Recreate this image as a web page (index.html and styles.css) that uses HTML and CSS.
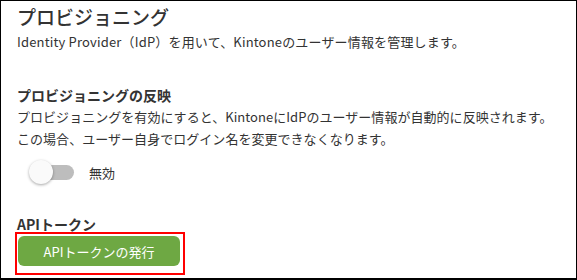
FILE: index.html
```html
<!DOCTYPE html>
<html lang="ja">
<head>
<meta charset="utf-8">
<link rel="stylesheet" href="styles.css">
</head>
<body>
<div class="frame">
  <h1 class="title">プロビジョニング</h1>
  <p class="subtitle">Identity Provider（IdP）を用いて、Kintoneのユーザー情報を管理します。</p>

  <h2 class="heading first">プロビジョニングの反映</h2>
  <p class="desc">プロビジョニングを有効にすると、KintoneにIdPのユーザー情報が自動的に反映されます。<br>この場合、ユーザー自身でログイン名を変更できなくなります。</p>

  <div class="toggle-row">
    <span class="toggle"><span class="track"></span><span class="knob"></span></span>
    <span class="toggle-label">無効</span>
  </div>

  <h2 class="heading api">APIトークン</h2>
  <div class="highlight">
    <button class="btn">APIトークンの発行</button>
  </div>
</div>
</body>
</html>
```

FILE: styles.css
```css
html, body {
  margin: 0;
  padding: 0;
  background: #fff;
}
body {
  font-family: "Noto Sans CJK JP", "Noto Sans", sans-serif;
  color: #333;
}
.frame {
  box-sizing: border-box;
  width: 577px;
  height: 280px;
  border: 1px solid #000;
  border-bottom-width: 2px;
  padding: 3px 16px 0 16px;
  overflow: hidden;
}
.title {
  margin: 0;
  font-size: 19px;
  line-height: 26px;
  font-weight: 500;
  color: #333;
}
.subtitle {
  margin: 1px 0 0;
  font-size: 13px;
  line-height: 22px;
  letter-spacing: 0.17px;
}
.heading {
  margin: 0;
  font-size: 14px;
  font-weight: 700;
  color: #333;
}
.heading.first {
  margin-top: 31px;
  line-height: 22px;
}
.desc {
  margin: 0;
  font-size: 13px;
  line-height: 22px;
  letter-spacing: 0.04px;
}
.toggle-row {
  display: flex;
  align-items: center;
  height: 26px;
  margin-top: 9px;
  padding-left: 12px;
}
.toggle {
  position: relative;
  width: 45px;
  height: 26px;
  flex: none;
}
.track {
  position: absolute;
  left: 8px;
  top: 6px;
  width: 37px;
  height: 15px;
  border-radius: 8px;
  background: #bdbdbd;
}
.knob {
  position: absolute;
  left: 0;
  top: 1px;
  width: 24px;
  height: 24px;
  border-radius: 50%;
  background: #fafafa;
  box-shadow: 0 1px 3px rgba(0,0,0,0.35);
}
.toggle-label {
  margin-left: 15px;
  font-size: 13px;
}
.heading.api {
  margin-top: 30px;
  line-height: 18px;
}
.highlight {
  display: inline-block;
  margin: -1px 0 0 -2px;
  border: 2px solid #f00;
  padding: 2px 3px 7px 1px;
}
.btn {
  display: block;
  width: 162px;
  height: 30px;
  border: none;
  border-radius: 6px;
  background: #6ea843;
  color: #fff;
  font-family: "Noto Sans CJK JP", "Noto Sans", sans-serif;
  font-size: 13px;
  padding: 0;
}
```
